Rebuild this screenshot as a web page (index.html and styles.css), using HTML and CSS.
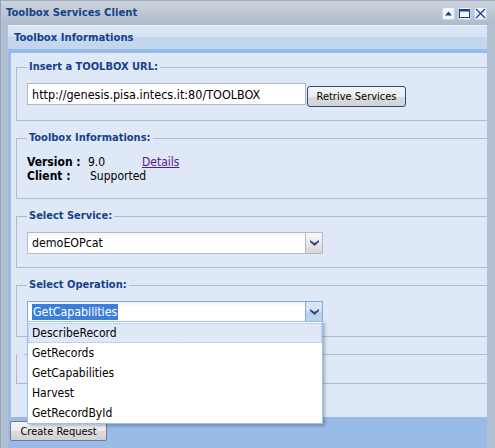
FILE: index.html
```html
<!DOCTYPE html>
<html>
<head>
<meta charset="utf-8">
<link rel="stylesheet" href="styles.css">
</head>
<body>
<div class="window">
  <div class="titlebar">
    <span class="title">Toolbox Services Client</span>
    <div class="tools">
      <span class="tool"><svg width="9" height="9" viewBox="0 0 9 9"><path d="M1 6.5 L4.5 2.5 L8 6.5 Z" fill="#15428b"/></svg></span>
      <span class="tool"><svg width="11" height="9" viewBox="0 0 11 9"><rect x="0.5" y="0.5" width="10" height="8" fill="none" stroke="#15428b"/><rect x="0.5" y="0.5" width="10" height="2" fill="#15428b"/></svg></span>
      <span class="tool"><svg width="11" height="11" viewBox="0 0 11 11"><path d="M1 1 L10 10 M10 1 L1 10" stroke="#15428b" stroke-width="1.3"/></svg></span>
    </div>
  </div>
  <div class="panel">
    <div class="panel-header">Toolbox Informations</div>
    <div class="panel-body">
      <fieldset class="fs">
        <legend>Insert a TOOLBOX URL:</legend>
        <div class="row">
          <input class="text url" type="text" value="http://genesis.pisa.intecs.it:80/TOOLBOX">
          <button class="btn btn-focus">Retrive Services</button>
        </div>
      </fieldset>
      <fieldset class="fs">
        <legend>Toolbox Informations:</legend>
        <div class="info">
          <div class="info-row"><b class="lbl">Version :</b><span class="val v1">9.0</span><a class="link" href="#">Details</a></div>
          <div class="info-row"><b class="lbl">Client :</b><span class="val v2">Supported</span></div>
        </div>
      </fieldset>
      <fieldset class="fs">
        <legend>Select Service:</legend>
        <div class="combo">
          <div class="combo-text">demoEOPcat</div>
          <div class="trigger"><svg width="9" height="6" viewBox="0 0 9 6"><path d="M0 0 L4.5 3 L9 0 L9 2 L4.5 6 L0 2 Z" fill="#2b4a84"/></svg></div>
        </div>
      </fieldset>
      <fieldset class="fs">
        <legend>Select Operation:</legend>
        <div class="combo focus">
          <div class="combo-text"><span class="sel">GetCapabilities</span></div>
          <div class="trigger"><svg width="9" height="6" viewBox="0 0 9 6"><path d="M0 0 L4.5 3 L9 0 L9 2 L4.5 6 L0 2 Z" fill="#2b4a84"/></svg></div>
        </div>
      </fieldset>
      <fieldset class="fs fs-last">
        <legend>&nbsp;</legend>
      </fieldset>
    </div>
    <div class="footer">
      <button class="btn">Create Request</button>
    </div>
  </div>
  <div class="dropdown">
    <div class="item active">DescribeRecord</div>
    <div class="item">GetRecords</div>
    <div class="item">GetCapabilities</div>
    <div class="item">Harvest</div>
    <div class="item">GetRecordById</div>
  </div>
</div>
</body>
</html>
```

FILE: styles.css
```css
html, body {
  margin: 0;
  padding: 0;
}
body {
  width: 495px;
  height: 448px;
  overflow: hidden;
  font-family: "DejaVu Sans Condensed", "DejaVu Sans", sans-serif;
  font-size: 12px;
}
.window {
  position: relative;
  width: 495px;
  height: 448px;
  box-sizing: border-box;
  background: #b2c0d2;
  border-left: 1px solid #8fa4c0;
  border-top: 1px solid #9aaec8;
  display: flex;
  flex-direction: column;
}
.titlebar {
  height: 24px;
  flex: none;
  display: flex;
  align-items: center;
  justify-content: space-between;
  padding: 0 8px 0 5px;
  background: linear-gradient(#cdd3db, #aebbcc);
}
.title {
  font-weight: bold;
  font-size: 11.2px;
  color: #15428b;
  margin-top: -1px;
}
.tools {
  display: flex;
  gap: 3px;
  margin-top: 1px;
}
.tool {
  width: 13px;
  height: 13px;
  box-sizing: border-box;
  border: 1px solid #c6d4e6;
  border-radius: 2px;
  background: #f2f6fb;
  display: flex;
  align-items: center;
  justify-content: center;
}
.panel {
  flex: 1;
  display: flex;
  flex-direction: column;
  margin: 0 8px 0 7px;
  background: #99bbe8;
  min-height: 0;
}
.panel-header {
  height: 24px;
  flex: none;
  box-sizing: border-box;
  border-top: 1px solid #eef3fa;
  padding: 5px 0 0 6px;
  font-weight: bold;
  font-size: 11.2px;
  color: #15428b;
  background: linear-gradient(#dce8f6 0, #d5e2f3 45%, #c4d7ef 50%, #c2d5ee 100%);
}
.panel-body {
  flex: none;
  height: 364px;
  margin: 4px 0 0 3px;
  background: #dfe8f6;
  overflow: hidden;
  padding: 7px 0 0 5px;
  box-sizing: border-box;
}
.fs {
  border: 1px solid #b5b8c8;
  margin: 0 -20px 10px 0;
  padding: 9px 10px 13px 10px;
  min-width: 0;
}
.fs legend {
  padding: 0 2px;
  font-weight: bold;
  font-size: 11px;
  line-height: 14px;
  color: #15428b;
}
.fs-last {
  height: 35px;
  box-sizing: content-box;
  padding: 0;
}
.row {
  display: flex;
  align-items: flex-start;
  height: 24px;
}
.text {
  font-family: inherit;
  font-size: 12.5px;
  box-sizing: border-box;
  height: 22px;
  border: 1px solid #b5b8c8;
  background: #fff;
  padding: 0 4px;
  outline: none;
  color: #000;
}
.url {
  width: 279px;
}
.btn {
  font-family: inherit;
  font-size: 11px;
  height: 21px;
  box-sizing: border-box;
  border: 1px solid #707070;
  border-radius: 3px;
  background: linear-gradient(#f6f6f6 0, #ececec 50%, #dcdcdc 51%, #d2d2d2 100%);
  padding: 0;
  white-space: nowrap;
  color: #000;
}
.btn-focus {
  margin: 3px 0 0 1px;
  width: 99px;
  border-color: #274f7c;
}
.info {
  padding: 1px 0 2px 0;
}
.info-row {
  display: flex;
  height: 14px;
  line-height: 14px;
  font-size: 12px;
}
.lbl {
  width: 61px;
  color: #000;
}
.v1 {
  width: 54px;
}
.v2 {
  margin-left: 2px;
}
.link {
  color: #551a8b;
}
.combo {
  display: flex;
  width: 296px;
  height: 22px;
  box-sizing: border-box;
  border: 1px solid #b5b8c8;
  background: linear-gradient(#f4f4f4, #ffffff 6px);
  font-size: 12.3px;
}
.combo-text {
  flex: 1;
  padding: 0 4px;
  line-height: 20px;
}
.trigger {
  width: 17px;
  flex: none;
  border-left: 1px solid #b5b8c8;
  background: linear-gradient(#f9f9f9, #e6e6e6 55%, #d6d6d6);
  display: flex;
  justify-content: center;
  padding-top: 7px;
  box-sizing: border-box;
}
.combo.focus {
  border-color: #7eadd9;
}
.combo.focus .trigger {
  border-left-color: #7eadd9;
  background: linear-gradient(#d9e6f5 0, #d2e0f2 45%, #bcd2ec 50%, #bcd2ec 100%);
}
.sel {
  background: #3d7fd7;
  color: #fff;
  padding: 1px 1px;
}
.footer {
  flex: 1;
  padding: 4px 0 0 2px;
}
.footer .btn {
  width: 97px;
  height: 20px;
  border-color: #6d7c93;
  border-radius: 2px;
}
.dropdown {
  position: absolute;
  left: 26px;
  top: 320px;
  width: 296px;
  height: 103px;
  box-sizing: border-box;
  background: #fff;
  border: 1px solid #98c0f4;
  box-shadow: 2px 2px 3px rgba(0, 0, 0, 0.25);
  padding-top: 1px;
  font-size: 12px;
}
.item {
  height: 20px;
  line-height: 18px;
  padding: 0 3px;
  box-sizing: border-box;
  border: 1px solid transparent;
}
.item.active {
  background: #dfe8f6;
  border: 1px dotted #a3bae9;
}
```
